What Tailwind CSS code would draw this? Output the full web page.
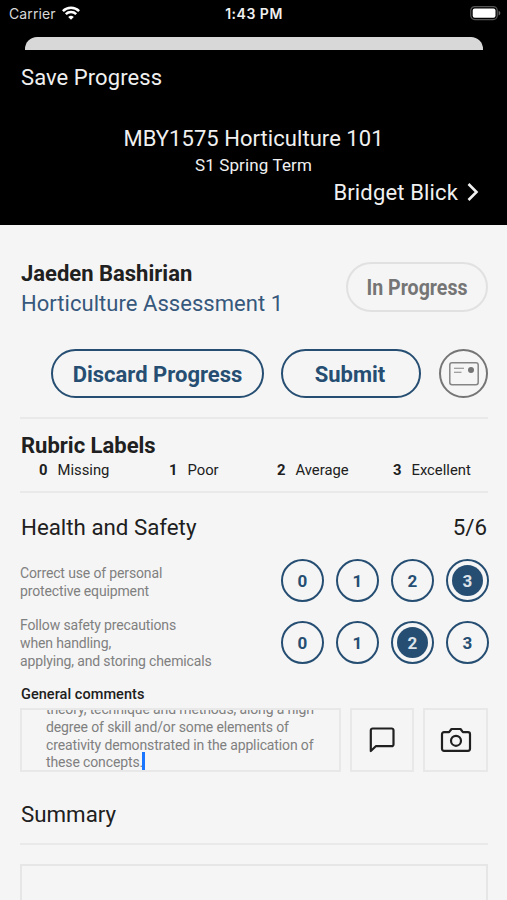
<!DOCTYPE html>
<html lang="en">
<head>
<meta charset="utf-8">
<title>Horticulture Assessment 1</title>
<script src="https://cdn.jsdelivr.net/npm/@tailwindcss/browser@4"></script>
</head>
<body class="h-[900px] w-[507px] overflow-hidden bg-[#f5f5f5] font-['Roboto',sans-serif] text-[#202020]">
<div class="flex h-[900px] flex-col overflow-hidden whitespace-nowrap">
  <header class="h-[225px] shrink-0 bg-black text-[#f0f0f0]">
    <div class="grid h-[37px] grid-cols-3 items-start px-[9px] pt-[4px] font-['Inter',sans-serif] text-[14px] leading-[20px]">
      <div class="flex items-center gap-[6px] text-[#d8d8d8]">
        <span class="tracking-[0.1px]">Carrier</span>
        <svg class="-mt-[2px] h-[14px] w-[18px]" viewBox="0 0 18 14" fill="none" stroke="#fff" stroke-width="2.5"><path d="M.9 5.1a11.5 11.5 0 0 1 16.2 0M3.8 8.2a7.4 7.4 0 0 1 10.4 0"/><path d="M9 13.8 6.2 11a4 4 0 0 1 5.6 0Z" fill="#fff" stroke="none"/></svg>
      </div>
      <div class="pl-px text-center font-semibold tracking-[0.5px]">1:43 PM</div>
      <svg class="mt-[2px] -mr-[3px] h-[16px] w-[31px] justify-self-end" viewBox="0 0 31 16"><rect x=".75" y=".6" width="26.5" height="13" rx="4" fill="none" stroke="#555" stroke-width="1.2"/><rect x="2.7" y="2.4" width="22.8" height="9.4" rx="2" fill="#fff"/><path d="M28.6 4.800c2.3.8 2.3 3.8 0 4.6Z" fill="#666"/></svg>
    </div>
    <div class="ml-[25px] h-[13px] w-[458px] rounded-t-[12px] bg-[#d8d8d8]"></div>
    <div class="pt-[13px] pl-[21px] text-[22px] leading-[30px] tracking-[0.07px]">Save Progress</div>
    <div class="pt-[31px] text-center text-[22px] leading-[30px] tracking-[0.05px]">MBY1575 Horticulture 101</div>
    <div class="text-center text-[17px] leading-[22px] tracking-[0.13px]">S1 Spring Term</div>
    <div class="flex items-center justify-end gap-[9px] pt-[2px] pr-[28px] text-[22px] leading-[30px]">
      <span class="tracking-[0.15px]">Bridget Blick</span>
      <svg class="-mt-[2px] h-[18px] w-[12px]" viewBox="0 0 12 18" fill="none" stroke="#f0f0f0" stroke-width="2.6"><path d="m1.5 1 8 8-8 8"/></svg>
    </div>
  </header>

  <main class="flex flex-col pr-[19px] pl-[20px]">
    <section class="flex h-[124px] justify-between pt-[34px] pl-px">
      <div class="text-[22px] leading-[30px]">
        <h1 class="font-bold">Jaeden Bashirian</h1>
        <p class="tracking-[0.04px] text-[#36587c]">Horticulture Assessment 1</p>
      </div>
      <div class="mt-[3px] flex h-[50px] w-[142px] items-center justify-center rounded-full border-2 border-[#e1e1e1] pt-[2px] text-[22.5px] font-bold text-[#757575]"><span class="inline-block scale-x-[0.87]">In Progress</span></div>
    </section>

    <section class="flex h-[70px] items-start justify-end border-b-2 border-[#e9e9e9] text-[22px] font-bold text-[#264e72]">
      <button class="mr-[17px] flex h-[49px] w-[213px] items-center justify-center rounded-full border-2 border-[#264e72] pt-[2px]">Discard Progress</button>
      <button class="mr-[18px] flex h-[49px] w-[140px] items-center justify-center rounded-full border-2 border-[#264e72] pt-[2px] pr-[2px]">Submit</button>
      <button class="flex size-[49px] items-center justify-center rounded-full border-2 border-[#757575]">
        <svg class="h-[24px] w-[30px]" viewBox="0 0 30 24" fill="none" stroke="#858585" stroke-width="1.5"><rect x=".8" y=".8" width="28.4" height="22" rx="2.2"/><path d="M5 6.300h10M5 10.200h7.500" stroke-width="1.1"/><circle cx="22" cy="8" r="3" fill="#757575" stroke="none"/></svg>
      </button>
    </section>

    <section class="h-[74px] border-b-2 border-[#e9e9e9] pt-[12px] pl-px">
      <h2 class="text-[22px] leading-[30px] font-bold">Rubric Labels</h2>
      <div class="flex text-[14.8px] leading-[18px]">
        <div class="flex w-[130px] gap-[10px] pl-[18px]"><b>0</b><span>Missing</span></div>
        <div class="flex w-[108px] gap-[10px] pl-[18px]"><b>1</b><span>Poor</span></div>
        <div class="flex w-[116px] gap-[10px] pl-[18px]"><b>2</b><span>Average</span></div>
        <div class="flex gap-[10px] pl-[18px]"><b>3</b><span>Excellent</span></div>
      </div>
    </section>

    <section class="h-[302px] pt-[19px]">
      <div class="flex justify-between pr-px pl-px text-[22.3px] leading-[30px]"><h2>Health and Safety</h2><span>5/6</span></div>
      <div class="-mr-px mt-[17px] flex h-[62px] justify-between text-[17px] font-bold text-[#264e72]">
        <p class="pt-[5px] text-[14px] leading-[18px] font-normal tracking-[-0.14px] text-[#808080]">Correct use of personal<br>protective equipment</p>
        <div class="flex gap-[12px]">
          <span class="flex size-[43px] items-center justify-center rounded-full border-[2.5px] border-[#264e72] pt-[2px]">0</span>
          <span class="flex size-[43px] items-center justify-center rounded-full border-[2.5px] border-[#264e72] pt-[2px]">1</span>
          <span class="flex size-[43px] items-center justify-center rounded-full border-[2.5px] border-[#264e72] pt-[2px]">2</span>
          <span class="flex size-[43px] items-center justify-center rounded-full border-[2.5px] border-[#264e72]"><i class="flex size-[31px] items-center justify-center rounded-full bg-[#264e72] pt-[2px] text-[#dce3ea] not-italic">3</i></span>
        </div>
      </div>
      <div class="-mr-px flex h-[62px] justify-between text-[17px] font-bold text-[#264e72]">
        <p class="-mt-[5px] text-[14px] leading-[18px] font-normal tracking-[-0.14px] text-[#808080]">Follow safety precautions<br>when handling,<br>applying, and storing chemicals</p>
        <div class="flex gap-[12px]">
          <span class="flex size-[43px] items-center justify-center rounded-full border-[2.5px] border-[#264e72] pt-[2px]">0</span>
          <span class="flex size-[43px] items-center justify-center rounded-full border-[2.5px] border-[#264e72] pt-[2px]">1</span>
          <span class="flex size-[43px] items-center justify-center rounded-full border-[2.5px] border-[#264e72]"><i class="flex size-[31px] items-center justify-center rounded-full bg-[#264e72] pt-[2px] text-[#dce3ea] not-italic">2</i></span>
          <span class="flex size-[43px] items-center justify-center rounded-full border-[2.5px] border-[#264e72] pt-[2px]">3</span>
        </div>
      </div>
      <h3 class="pt-px pl-px text-[14.5px] leading-[22px] font-medium tracking-[0.05px]">General comments</h3>
      <div class="mt-[2px] flex h-[64px]">
        <div class="mr-[9px] flex w-[321px] flex-col justify-end overflow-hidden border-2 border-[#e8e8e8] pl-[24px] text-[14px] leading-[17.7px] tracking-[-0.13px] text-[#808080]">
          <p class="-mb-[2px]">theory, technique and methods, along a high<br>degree of skill and/or some elements of<br>creativity demonstrated in the application of<br>these concepts.<i class="-mt-[5px] mb-[2px] -ml-px inline-block h-[18px] w-[2.5px] bg-[#1a75ff] align-bottom"></i></p>
        </div>
        <button class="mr-[9px] flex w-[64px] items-center justify-center border-2 border-[#e8e8e8]">
          <svg class="size-[28px]" viewBox="0 0 28 28" fill="none" stroke="#202020" stroke-width="2.2" stroke-linejoin="round"><path d="M2.8 25V4.300a1.800 1.800 0 0 1 1.800-1.800h19.100a1.800 1.800 0 0 1 1.800 1.800v14.100a1.800 1.800 0 0 1-1.800 1.800H7.800Z"/></svg>
        </button>
        <button class="flex w-[65px] items-center justify-center border-2 border-[#e8e8e8]">
          <svg class="h-[28px] w-[32px]" viewBox="0 0 32 28" fill="none" stroke="#202020" stroke-width="2.2" stroke-linejoin="round"><path d="M4 6.200h5.100l2.400-3.200h9l2.400 3.200H28a2 2 0 0 1 2 2v14.600a2 2 0 0 1-2 2H4a2 2 0 0 1-2-2V8.200a2 2 0 0 1 2-2Z"/><circle cx="16" cy="14.800" r="5"/></svg>
        </button>
      </div>
    </section>

    <section class="pt-[4px]">
      <h2 class="h-[46px] border-b-2 border-[#e9e9e9] pl-px text-[22.3px] leading-[30px]">Summary</h2>
      <div class="mt-[19px] h-[60px] border-2 border-[#e6e6e6]"></div>
    </section>
  </main>
</div>
</body>
</html>
